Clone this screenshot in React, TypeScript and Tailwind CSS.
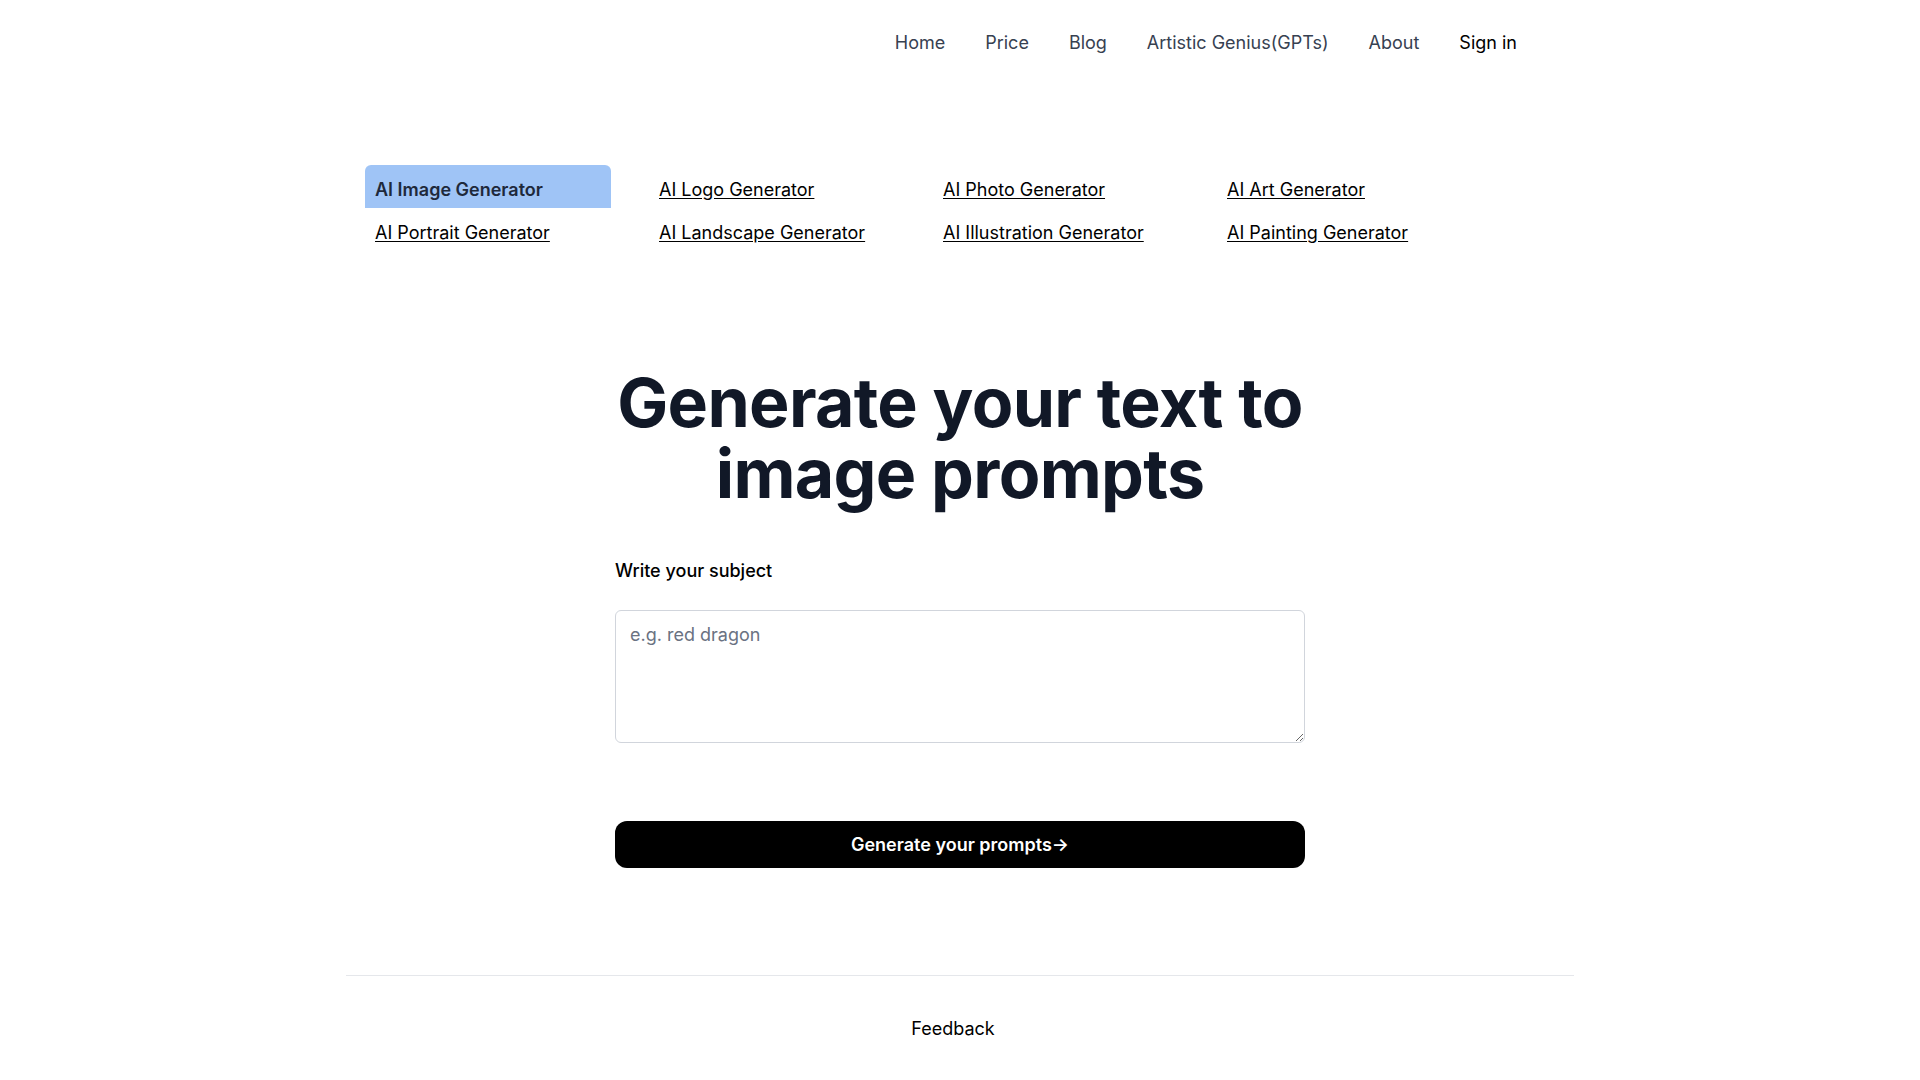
import { useState } from 'react'

const navLinks = ['Home', 'Price', 'Blog', 'Artistic Genius(GPTs)', 'About']

const generators = [
  'AI Image Generator',
  'AI Logo Generator',
  'AI Photo Generator',
  'AI Art Generator',
  'AI Portrait Generator',
  'AI Landscape Generator',
  'AI Illustration Generator',
  'AI Painting Generator',
]

export default function App() {
  const [subject, setSubject] = useState('')

  return (
    <div className="min-h-screen bg-white text-gray-900" style={{ fontFamily: 'Inter, "Noto Sans", sans-serif' }}>
      <div className="mx-auto w-[1228px]">
        <header className="flex h-[86px] items-center justify-end pr-[57px]">
          <nav className="flex items-center gap-[40px] text-lg">
            {navLinks.map(l => (
              <a key={l} href="#" className="text-[#374151]">{l}</a>
            ))}
            <a href="#" className="text-black">Sign in</a>
          </nav>
        </header>

        <div className="mt-[79px] grid w-[1117px] grid-cols-4 gap-x-[38px] pl-[19px]">
          {generators.map((g, i) => (
            <a
              key={g}
              href="#"
              className={
                i === 0
                  ? 'flex h-[43px] items-center rounded-t-md bg-[#9fc4f6] px-[10px] pt-[7px] text-lg font-semibold text-[#1e293b]'
                  : 'flex h-[43px] items-center px-[10px] pt-[7px] text-lg text-black underline underline-offset-2'
              }
            >
              {g}
            </a>
          ))}
        </div>

        <main className="mx-auto mt-[116px] flex w-[690px] flex-col">
          <h1 className="text-center text-[68px] leading-[71px] font-bold tracking-[-0.01em] text-[#111827]">
            Generate your text to image prompts
          </h1>

          <label className="mt-[48px] text-lg font-medium text-black">Write your subject</label>
          <textarea
            value={subject}
            onChange={e => setSubject(e.target.value)}
            placeholder="e.g. red dragon"
            className="mt-[25px] h-[133px] w-full rounded-md border border-gray-300 px-[14px] py-[10px] text-lg text-gray-900 placeholder:text-gray-500 focus:outline-none"
          />

          <button className="mt-[78px] h-[47px] w-full rounded-xl bg-black text-lg font-semibold text-white">
            Generate your prompts→
          </button>
        </main>

        <footer className="mt-[107px] border-t border-gray-200">
          <div className="flex justify-center py-[39px] pr-[14px]">
            <a href="#" className="text-lg text-black">Feedback</a>
          </div>
        </footer>
      </div>
    </div>
  )
}
